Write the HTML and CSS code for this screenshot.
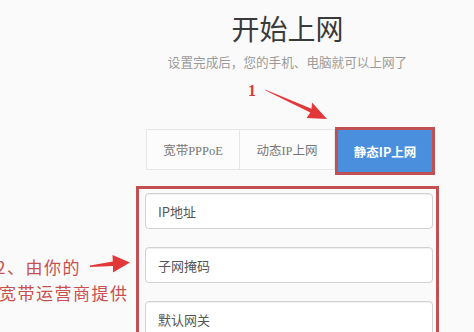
FILE: index.html
```html
<!DOCTYPE html>
<html lang="zh-CN">
<head>
    <meta charset="UTF-8">
    <meta name="viewport" content="width=device-width, initial-scale=1.0">
    <title>开始上网</title>
    <link rel="stylesheet" href="styles.css">
</head>
<body>
    <div class="page">
        <div class="setup">
            <h1 class="title">开始上网</h1>
            <p class="subtitle">设置完成后，您的手机、电脑就可以上网了</p>

            <!-- Connection type tabs -->
            <div class="tabs">
                <div class="tab">宽带PPPoE</div>
                <div class="tab">动态IP上网</div>
                <div class="tab active">静态IP上网</div>
            </div>

            <!-- Static IP fields -->
            <div class="fields">
                <input type="text" placeholder="IP地址">
                <input type="text" placeholder="子网掩码">
                <input type="text" placeholder="默认网关">
            </div>
        </div>

        <!-- Annotations -->
        <span class="note note-one">1</span>
        <div class="note note-two">
            <span class="line first">2、由你的</span>
            <span class="line">宽带运营商提供</span>
        </div>
        <svg class="arrows" width="474" height="332" viewBox="0 0 474 332">
            <polygon points="265,89.6 265.6,90.4 310.3,112.6 306.5,118.1 327,119 312,102.5 311.5,108.8" fill="#e2383a"/>
            <polygon points="90,265.5 90,267 113,266 113,272.5 130,262.5 112.5,255 112.8,261.5" fill="#e2383a"/>
        </svg>
    </div>
</body>
</html>
```

FILE: styles.css
```css
* {
    margin: 0;
    padding: 0;
    box-sizing: border-box;
}

body {
    background: #fafafa;
    font-family: "Noto Sans CJK SC", "Noto Sans", sans-serif;
    overflow: hidden;
}

.page {
    position: relative;
    width: 474px;
    height: 332px;
    overflow: hidden;
}

.setup {
    width: 303px;
    margin-left: 136px;
    padding-top: 11px;
    display: flex;
    flex-direction: column;
    align-items: center;
}

.title {
    font-size: 28px;
    font-weight: normal;
    line-height: 34px;
    color: #3a3a3a;
}

.subtitle {
    margin-top: 7px;
    font-size: 12.6px;
    line-height: 20px;
    color: #9a9a9a;
}

.tabs {
    align-self: stretch;
    display: flex;
    align-items: flex-start;
    margin-top: 57px;
    padding-left: 10px;
}

.tab {
    width: 95px;
    height: 41px;
    display: flex;
    align-items: center;
    justify-content: center;
    background: #fcfcfc;
    border: 1px solid #e6e6e6;
    border-left: none;
    font-family: "Liberation Serif", "Noto Sans CJK SC", serif;
    font-size: 12.5px;
    color: #777;
}

.tab:first-child {
    width: 94px;
    border-left: 1px solid #e6e6e6;
}

.tab.active {
    width: 94px;
    height: 42px;
    margin: 1px 0 0 3px;
    border: none;
    background: #4a8fde;
    outline: 3px solid #c24f52;
    color: #fff;
    font-family: "Noto Sans CJK SC", sans-serif;
    font-weight: bold;
    font-size: 12.5px;
}

.fields {
    align-self: stretch;
    margin-top: 14px;
    height: 160px;
    border: 3px solid #c24f52;
    border-bottom: none;
    padding: 4px 3px 0 6px;
    display: flex;
    flex-direction: column;
    gap: 18px;
}

.fields input {
    height: 36px;
    padding: 0 12px;
    border: 1px solid #d2d2d2;
    border-radius: 4px;
    background: #fff;
    box-shadow: inset 0 1px 1px rgba(0, 0, 0, 0.06);
    font-family: "Noto Sans CJK SC", sans-serif;
    font-size: 13px;
    outline: none;
}

.fields input::placeholder {
    color: #555;
}

.note {
    position: absolute;
    color: #c8504f;
}

.note-one {
    left: 248px;
    top: 82px;
    font-family: "Liberation Serif", serif;
    font-weight: bold;
    font-size: 16px;
    color: #d63b3c;
}

.note-two {
    left: -4px;
    top: 254px;
    font-size: 17px;
    line-height: 26px;
    letter-spacing: 1.5px;
}

.note-two .line {
    display: block;
}

.note-two .line + .line {
    padding-left: 3px;
}

.arrows {
    position: absolute;
    left: 0;
    top: 0;
    pointer-events: none;
}
```
